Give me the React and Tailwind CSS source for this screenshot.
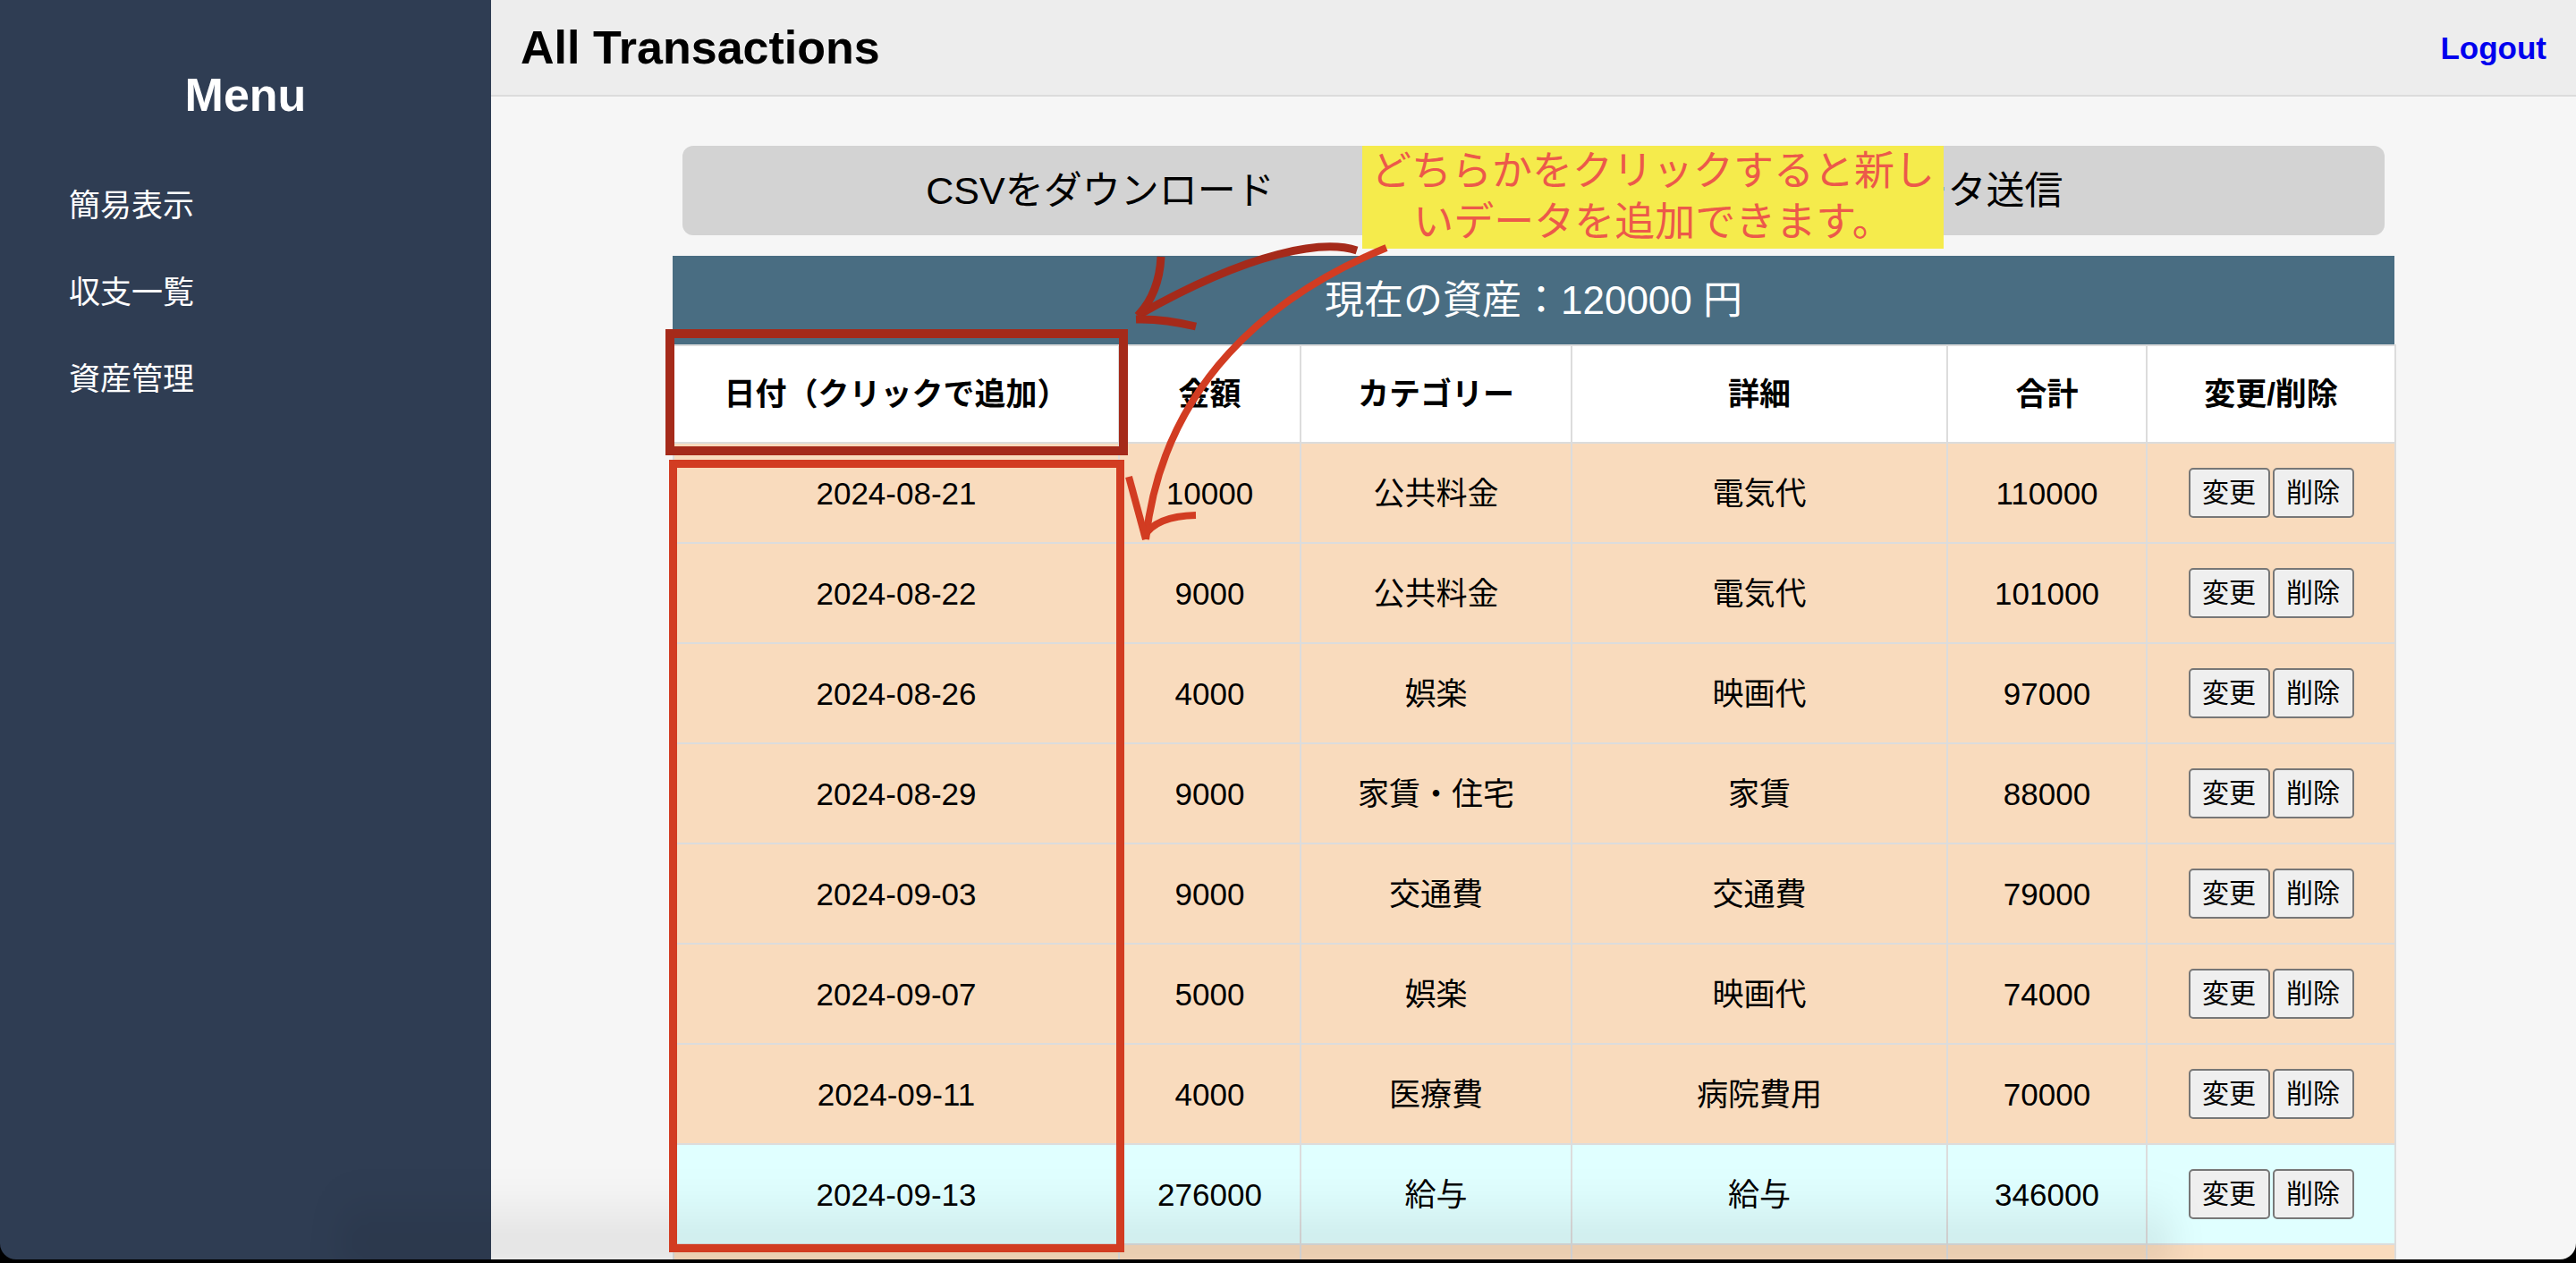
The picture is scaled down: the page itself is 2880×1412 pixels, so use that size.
import React from "react";

const rows = [
  ["2024-08-21", "10000", "公共料金", "電気代", "110000", "p"],
  ["2024-08-22", "9000", "公共料金", "電気代", "101000", "p"],
  ["2024-08-26", "4000", "娯楽", "映画代", "97000", "p"],
  ["2024-08-29", "9000", "家賃・住宅", "家賃", "88000", "p"],
  ["2024-09-03", "9000", "交通費", "交通費", "79000", "p"],
  ["2024-09-07", "5000", "娯楽", "映画代", "74000", "p"],
  ["2024-09-11", "4000", "医療費", "病院費用", "70000", "p"],
  ["2024-09-13", "276000", "給与", "給与", "346000", "c"],
];

function RowButtons() {
  return (
    <div className="flex items-center justify-center gap-[3px]">
      <button className="w-[91px] h-[56px] bg-[#efefef] border-2 border-[#777777] rounded-[5px] text-[30px] leading-none text-black">
        変更
      </button>
      <button className="w-[91px] h-[56px] bg-[#efefef] border-2 border-[#777777] rounded-[5px] text-[30px] leading-none text-black">
        削除
      </button>
    </div>
  );
}

export default function App() {
  return (
    <div className="relative w-[2880px] h-[1412px] bg-black overflow-hidden font-['Liberation_Sans','Noto_Sans_CJK_JP',sans-serif]">
      <div className="flex h-[1408px] rounded-b-[18px] overflow-hidden">
        <aside className="w-[549px] shrink-0 bg-[#2f3d53] text-white">
          <h2 className="pt-[80px] text-center text-[52px] font-bold leading-none">Menu</h2>
          <ul className="mt-[49px]">
            <li className="h-[97px] flex items-center pl-[77px] text-[35px] leading-none">簡易表示</li>
            <li className="h-[97px] flex items-center pl-[77px] text-[35px] leading-none">収支一覧</li>
            <li className="h-[97px] flex items-center pl-[77px] text-[35px] leading-none">資産管理</li>
          </ul>
        </aside>
        <main className="flex-1 bg-[#f6f6f6] flex flex-col">
          <header className="h-[108px] shrink-0 bg-[#ededed] border-b-2 border-[#dcdcdc] flex items-center justify-between pl-[33px] pr-[33px]">
            <h1 className="text-[52px] font-bold leading-none text-black">All Transactions</h1>
            <a className="text-[35px] font-bold leading-none text-[#0000ee]">Logout</a>
          </header>
          <div className="mt-[55px] w-[1903px] mx-auto flex gap-[35px]">
            <button className="w-[934px] h-[100px] bg-[#d3d3d3] rounded-[12px] text-[43px] text-black leading-none">
              CSVをダウンロード
            </button>
            <button className="w-[934px] h-[100px] bg-[#d3d3d3] rounded-[12px] text-[43px] text-black leading-none">
              データ送信
            </button>
          </div>
          <div className="mt-[23px] w-[1925px] mx-auto">
            <div className="h-[99px] bg-[#496d82] flex items-center justify-center text-white text-[44px] leading-none">
              現在の資産：120000 円
            </div>
            <table className="w-[1925px] table-fixed border-collapse text-black">
              <colgroup>
                <col className="w-[498px]" />
                <col className="w-[203px]" />
                <col className="w-[303px]" />
                <col className="w-[420px]" />
                <col className="w-[223px]" />
                <col className="w-[278px]" />
              </colgroup>
              <thead>
                <tr className="h-[109px] bg-white">
                  <th className="border-2 border-[#dcdcdc] text-[35px] font-bold leading-none">日付（クリックで追加）</th>
                  <th className="border-2 border-[#dcdcdc] text-[35px] font-bold leading-none">金額</th>
                  <th className="border-2 border-[#dcdcdc] text-[35px] font-bold leading-none">カテゴリー</th>
                  <th className="border-2 border-[#dcdcdc] text-[35px] font-bold leading-none">詳細</th>
                  <th className="border-2 border-[#dcdcdc] text-[35px] font-bold leading-none">合計</th>
                  <th className="border-2 border-[#dcdcdc] text-[35px] font-bold leading-none">変更/削除</th>
                </tr>
              </thead>
              <tbody>
                {rows.map((r) => (
                  <tr key={r[0]} className={r[5] === "c" ? "h-[112px] bg-[#e0ffff]" : "h-[112px] bg-[#f9dbbd]"}>
                    <td className="border-2 border-[#dcdcdc] text-center text-[35px] leading-none">{r[0]}</td>
                    <td className="border-2 border-[#dcdcdc] text-center text-[35px] leading-none">{r[1]}</td>
                    <td className="border-2 border-[#dcdcdc] text-center text-[35px] leading-none">{r[2]}</td>
                    <td className="border-2 border-[#dcdcdc] text-center text-[35px] leading-none">{r[3]}</td>
                    <td className="border-2 border-[#dcdcdc] text-center text-[35px] leading-none">{r[4]}</td>
                    <td className="border-2 border-[#dcdcdc] text-center">
                      <RowButtons />
                    </td>
                  </tr>
                ))}
                <tr className="h-[112px] bg-[#f9dbbd]">
                  <td className="border-2 border-[#dcdcdc]" />
                  <td className="border-2 border-[#dcdcdc]" />
                  <td className="border-2 border-[#dcdcdc]" />
                  <td className="border-2 border-[#dcdcdc]" />
                  <td className="border-2 border-[#dcdcdc]" />
                  <td className="border-2 border-[#dcdcdc]" />
                </tr>
              </tbody>
            </table>
          </div>
        </main>
      </div>

      {/* bottom shadow */}
      <div className="pointer-events-none absolute left-[380px] bottom-[0px] w-[2050px] h-[90px] bg-gradient-to-b from-transparent to-black/10 blur-[18px]" />

      {/* annotation: yellow note */}
      <div className="absolute left-[1523px] top-[163px] w-[650px] h-[115px] bg-[#f5eb4c] text-[#ec594a] text-[45px] leading-[57px] text-center whitespace-nowrap">
        どちらかをクリックすると新し
        <br />
        いデータを追加できます。
      </div>

      {/* annotation: boxes and arrows */}
      <svg className="pointer-events-none absolute left-0 top-0" width="2880" height="1412" viewBox="0 0 2880 1412" fill="none">
        <rect x="749" y="373" width="507" height="131" stroke="#a52a1a" strokeWidth="10" />
        <rect x="752.5" y="518.5" width="500" height="877" stroke="#d23c22" strokeWidth="9" />
        <path d="M1517,280 C1480,268 1400,280 1273,352" stroke="#a52a1a" strokeWidth="9" />
        <path d="M1298,287 Q1296,328 1272,353" stroke="#a52a1a" strokeWidth="9" />
        <path d="M1270,357 Q1300,356 1337,365" stroke="#a52a1a" strokeWidth="9" />
        <path d="M1550,277 C1420,330 1300,430 1281,603" stroke="#d23c22" strokeWidth="8" />
        <path d="M1262,533 L1281,603" stroke="#d23c22" strokeWidth="8" />
        <path d="M1279,600 Q1292,577 1337,576" stroke="#d23c22" strokeWidth="8" />
      </svg>
    </div>
  );
}
